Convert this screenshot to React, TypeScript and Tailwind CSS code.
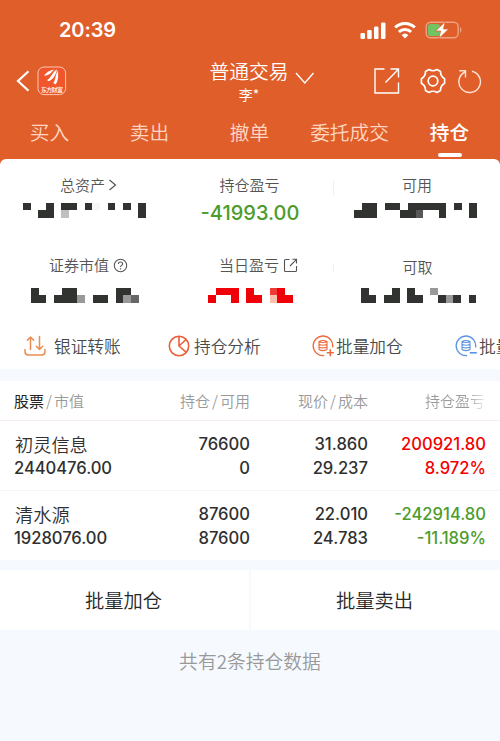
import React from 'react';

const CELL = 7.69;

const SHADES: Record<string, string> = {
  k: '#303330',
  d: '#585858',
  m: '#666666',
  g: '#999999',
  s: '#c0bfc0',
  w: '#f6f6f6',
  r: '#f00008',
  o: '#ef3b37',
  p: '#f8c0ae',
};

// Hidden amounts, drawn as two rows of coloured cells
const Mosaic: React.FC<{ rows: string[]; className: string }> = ({ rows, className }) => (
  <svg width={rows[0].length * CELL} height={15} className={className} shapeRendering="crispEdges" aria-hidden="true">
    {rows.map((row, y) =>
      row.split('').map((c, x) =>
        SHADES[c] ? (
          <rect key={`${x}-${y}`} x={x * CELL} y={y * 7} width={CELL + 0.1} height={7 + y} fill={SHADES[c]} />
        ) : null
      )
    )}
  </svg>
);

const StatusBar: React.FC = () => (
  <div className="flex h-[60px] items-center justify-between pl-[59px] pr-[37px]">
    <span className="font-['Inter'] text-[20px] font-semibold leading-6 tracking-[-0.1px]">20:39</span>
    <div className="flex items-center">
      <svg width="27" height="17" viewBox="0 0 27 17" fill="#fff">
        <rect x="0.5" y="11" width="4.5" height="6" rx="1.2" />
        <rect x="7.2" y="8" width="4.5" height="9" rx="1.2" />
        <rect x="14" y="4.5" width="4.5" height="12.5" rx="1.2" />
        <rect x="21" y="0.5" width="4.5" height="16.5" rx="1.2" />
      </svg>
      <svg width="22" height="17" viewBox="0 0 22 17" className="ml-[7px]" fill="none" stroke="#fff" strokeWidth="3">
        <path d="M1.2 5.5a14 14 0 0 1 19.6 0" />
        <path d="M4.9 9.8a9 9 0 0 1 12.2 0" />
        <path d="M11 16.4 7.6 13a5 5 0 0 1 6.8 0Z" fill="#fff" stroke="none" />
      </svg>
      <svg width="38" height="18" viewBox="0 0 38 18" className="ml-[9px]">
        <rect x="1.2" y="1.2" width="32" height="15.6" rx="4.5" fill="none" stroke="#f0a183" strokeWidth="1.4" />
        <path d="M35 6.3c2 .8 2 4.6 0 5.4Z" fill="#f0a183" />
        <rect x="3" y="3" width="12" height="12" rx="2.5" fill="#72c363" />
        <path d="M20.2 0.8 10.6 10h5l-1.7 7.5L23.6 8h-5.2l1.8-7.2Z" fill="#fff" stroke="#df5e29" strokeWidth="0.7" />
      </svg>
    </div>
  </div>
);

const AppLogo: React.FC = () => (
  <svg width="30" height="30" viewBox="0 0 30 30" className="ml-[7px]">
    <rect x="1" y="1" width="27.6" height="27.6" rx="6" fill="#f0552c" stroke="#fbc9b2" strokeWidth="1" />
    <path d="M7 9.8c2-3.3 6-5.7 10.5-6.2-2.7 1.5-3.7 5.8-10.2 6.2Z" fill="#fff" />
    <path d="M10 14c4.2-1.7 5-8 10-10.5-1 3.5-2.3 9.5-8.5 11.8Z" fill="#fff" />
    <path d="M16.3 17c2.4-3 2.2-9.5 4.6-12.5.6 4.2.7 10-2.3 14Z" fill="#fff" />
    <text x="14.9" y="25.6" textAnchor="middle" textLength="22" fontSize="6" fontWeight="500" fill="#fff" fontFamily="'Noto Sans CJK SC', sans-serif">东方财富</text>
  </svg>
);

const NavBar: React.FC = () => (
  <div className="grid h-[42px] grid-cols-[1fr_auto_1fr] grid-rows-[42px] items-center">
    <div className="flex items-center pl-4">
      <svg width="14" height="22" viewBox="0 0 14 22" fill="none" stroke="#fff" strokeWidth="2.2">
        <path d="M12.5 1.3 2 11l10.5 9.7" />
      </svg>
      <AppLogo />
    </div>
    <div className="flex h-[42px] flex-col items-center">
      <div className="relative -ml-[2px] -mt-px text-[19.8px] font-[350] leading-[23px]">
        普通交易
        <svg width="20" height="13" viewBox="0 0 20 13" className="absolute left-[86px] top-[13px]" fill="none" stroke="#fff" strokeWidth="1.4">
          <path d="M1 1l8.8 10L18.5 1" />
        </svg>
      </div>
      <div className="-ml-[2px] text-sm leading-[25px]">李*</div>
    </div>
    <div className="flex items-center justify-end pr-[18px]">
      <svg width="26" height="26" viewBox="0 0 26 26" fill="none" stroke="#fff" strokeWidth="1.4">
        <path d="M10.5 1H1v24h23.5V14.5M11.5 14.5 24.2 1.5M16.5 1h8v8.5" />
      </svg>
      <svg width="28" height="28" viewBox="0 0 28 28" className="ml-[19px]" fill="none" stroke="#fff" strokeWidth="1.7">
        <path
          strokeLinejoin="round"
          d="M10 2.5Q14 5 18 2.5L21.5 4.5Q21.4 9.2 25.6 11.7V16.3Q21.4 18.8 21.5 23.5L18 25.5Q14 23 10 25.5L6.5 23.5Q6.6 18.8 2.4 16.3V11.7Q6.6 9.2 6.5 4.5Z"
        />
        <circle cx="14" cy="14" r="4.8" />
      </svg>
      <svg width="25" height="25" viewBox="0 0 25 25" className="ml-[10px]" fill="none" stroke="#ffe3d5" strokeWidth="1.4">
        <path d="M15 2.2A10.8 10.8 0 1 1 8 3M2.3 1.8h6.2v6.8" />
      </svg>
    </div>
  </div>
);

const TABS = ['买入', '卖出', '撤单', '委托成交'];

const TradeTabs: React.FC = () => (
  <div className="grid h-[57px] grid-cols-5 pt-[7px] text-center text-[19.7px] leading-[45px]">
    {TABS.map((tab) => (
      <div key={tab} className="-ml-px font-[350] text-[#ffd6c4]">{tab}</div>
    ))}
    <div className="flex flex-col items-center font-medium">
      <span className="-ml-px">持仓</span>
      <span className="-mt-px h-[4px] w-6 rounded-full bg-white" />
    </div>
  </div>
);

const Label: React.FC<{ children: React.ReactNode }> = ({ children }) => (
  <div className="flex h-6 items-center justify-center gap-[2px] text-[15px] font-[350] leading-6 text-[#555]">{children}</div>
);

const Summary: React.FC = () => (
  <div className="grid h-[162px] grid-cols-[167px_166px_167px] grid-rows-[81px_81px]">
    <div className="pt-[14px]">
      <div className="pl-[10px]">
        <Label>
          总资产
          <svg width="9" height="12" viewBox="0 0 9 12" fill="none" stroke="#555" strokeWidth="1.2" className="ml-px">
            <path d="M1.5 1l6 5-6 5" />
          </svg>
        </Label>
      </div>
      <Mosaic className="ml-[23px] mt-[6px]" rows={['k..k.kk.kw.k.k.k', '..kk.s.........k']} />
    </div>
    <div className="pt-[14px]">
      <div className="-ml-px">
        <Label>持仓盈亏</Label>
      </div>
      <div className="text-center font-['Inter'] text-[20px] font-medium leading-8 text-[#4c9c2c]">-41993.00</div>
    </div>
    <div className="flex pt-[22px]">
      <div className="h-[14px] w-px bg-[#f3eeee]" />
      <div className="-mt-2 flex-1">
        <Label>可用</Label>
        <Mosaic className="ml-[20px] mt-[6px]" rows={['.kk.kk.kkkkk.k.k', 'kkk...kkd..k...k']} />
      </div>
    </div>
    <div className="pt-[13px]">
      <div className="pl-[10px]">
        <Label>
          证券市值
          <svg width="15" height="15" viewBox="0 0 15 15" fill="none" stroke="#555" strokeWidth="1.1" className="ml-[2px]">
            <circle cx="7.5" cy="7.5" r="6.2" />
            <path d="M5.4 5.9c0-2.7 4.2-2.5 4.2 0 0 1.5-2.1 1.5-2.1 3.2M7.5 10.2v1.2" />
          </svg>
        </Label>
      </div>
      <Mosaic className="ml-[31px] mt-[11px]" rows={['k...kk.....kk.', 'kk.kkkg.kk.kgm']} />
    </div>
    <div className="pt-[13px]">
      <div className="pl-[17px]">
        <Label>
          当日盈亏
          <svg width="15" height="15" viewBox="0 0 15 15" fill="none" stroke="#555" strokeWidth="1.1" className="ml-[2px]">
            <path d="M6.5 1.5h-4a1 1 0 0 0-1 1v10a1 1 0 0 0 1 1h10a1 1 0 0 0 1-1V8M7 8l6.3-6.3M9.3 1.3h4.2v4.2" />
          </svg>
        </Label>
      </div>
      <Mosaic className="ml-[41px] mt-[11px]" rows={['.rrr.r..or.', 'r..r.rr.prr']} />
    </div>
    <div className="flex pt-[23px]">
      <div className="h-2 w-px bg-[#f3eeee]" />
      <div className="-mt-2 flex-1">
        <div className="pl-px">
          <Label>可取</Label>
        </div>
        <Mosaic className="ml-[27px] mt-[9px]" rows={['k...k.k..g.....', 'kk.kk.kk..kgk.k']} />
      </div>
    </div>
  </div>
);

const TransferIcon: React.FC = () => (
  <svg width="22" height="22" viewBox="0 0 22 22" fill="none" stroke="#e98d52" strokeWidth="1.5" strokeLinecap="round" strokeLinejoin="round">
    <path d="M6.5 14.5V2L3.3 5.2M6.5 2l3.2 3.2M15.5 1.5v13l-3.2-3.2M15.5 14.5l3.2-3.2M1 14.5v2.3q0 3.2 3.2 3.2h13.6q3.2 0 3.2-3.2v-2.3" />
  </svg>
);

const PieIcon: React.FC = () => (
  <svg width="22" height="22" viewBox="0 0 22 22" fill="none" stroke="#e9603a" strokeWidth="1.6">
    <circle cx="11" cy="11" r="9.7" />
    <path d="M11 1.5V11l7 6.2M11 11l7-6.5" />
  </svg>
);

const BatchIcon: React.FC<{ color: string; plus?: boolean }> = ({ color, plus }) => (
  <svg width="22" height="22" viewBox="0 0 22 22" fill="none" stroke={color} strokeWidth="1.3">
    <path d="M20.6 12.5a9.8 9.8 0 1 0-8.4 8" />
    <path d="M7 6.5q4-2 8 0v8q-4 2.2-8 0ZM7 6.5q4 2 8 0M7 9.3q4 1.8 8 0M7 12q4 1.8 8 0" strokeWidth="1.1" />
    <path d={plus ? 'M14.8 17.8h7M18.3 14.3v7' : 'M14.8 17.8h7'} strokeWidth="1.6" />
  </svg>
);

const ACTIONS = [
  { icon: <TransferIcon />, label: '银证转账', className: 'w-[144px] gap-2' },
  { icon: <PieIcon />, label: '持仓分析', className: 'w-[144px] gap-1' },
  { icon: <BatchIcon color="#ea6a3b" plus />, label: '批量加仓', className: 'w-[143px] gap-[2px]' },
  { icon: <BatchIcon color="#5a93e0" />, label: '批量', className: 'w-[100px] gap-[2px]' },
];

const QuickActions: React.FC = () => (
  <div className="flex h-12 overflow-hidden pl-6 text-[16.7px] font-[350] text-[#4a4a4a]">
    {ACTIONS.map((a) => (
      <div key={a.label} className={`flex h-[50px] shrink-0 items-center whitespace-nowrap ${a.className}`}>
        {a.icon}
        <span className="pt-px">{a.label}</span>
      </div>
    ))}
  </div>
);

const HOLDINGS = [
  { name: '初灵信息', value: '2440476.00', amount: '76600', usable: '0', price: '31.860', cost: '29.237', profit: '200921.80', rate: '8.972%', color: 'text-[#f40000]' },
  { name: '清水源', value: '1928076.00', amount: '87600', usable: '87600', price: '22.010', cost: '24.783', profit: '-242914.80', rate: '-11.189%', color: 'text-[#4c9c2c]' },
];

const HoldingsTable: React.FC = () => (
  <div className="h-[179px] bg-white">
    <div className="grid h-10 grid-cols-[136px_100px_118px_117px] border-b border-[#f7eeee] pl-[14px] text-right text-[15px] font-[350] leading-[39px] text-[#999]">
      <div className="text-left"><span className="font-normal text-[#222]">股票</span><span className="px-[2px]">/</span>市值</div>
      <div>持仓<span className="px-[2px]">/</span>可用</div>
      <div>现价<span className="px-[2px]">/</span>成本</div>
      <div className="bg-gradient-to-r from-[#999] from-85% to-[#eee] bg-clip-text text-transparent">持仓盈亏</div>
    </div>
    {HOLDINGS.map((h) => (
      <div
        key={h.name}
        className="grid h-[70px] grid-cols-[136px_100px_118px_118px] border-b border-[#f5f5f5] pl-[14px] pt-[11px] text-right font-['Inter'] text-[16.6px] font-medium leading-6 text-[#303030] last:border-b-0"
      >
        <div className="text-left">
          <div className="h-6 pl-px font-['Noto_Sans_CJK_SC'] text-[18.2px] font-[350] leading-[25px]">{h.name}</div>
          <div className="tracking-[-0.05px]">{h.value}</div>
        </div>
        <div>
          <div>{h.amount}</div>
          <div>{h.usable}</div>
        </div>
        <div>
          <div>{h.price}</div>
          <div>{h.cost}</div>
        </div>
        <div className={h.color}>
          <div>{h.profit}</div>
          <div>{h.rate}</div>
        </div>
      </div>
    ))}
  </div>
);

const App: React.FC = () => (
  <div className="flex h-[741px] w-[500px] flex-col overflow-hidden bg-[#f6faff] font-['Noto_Sans_CJK_SC',sans-serif]">
    <div className="bg-[#df5e29]">
      <div className="text-white">
        <StatusBar />
        <NavBar />
        <TradeTabs />
      </div>
      <div className="rounded-t-md bg-white">
        <Summary />
        <QuickActions />
      </div>
    </div>
    <div className="mt-3">
      <HoldingsTable />
    </div>
    <div className="mt-[10px] grid h-[59px] grid-cols-2 gap-[2px] text-center text-[19.3px] font-[350] leading-[60px] text-[#282828]">
      <button className="bg-white pr-[2px]">批量加仓</button>
      <button className="bg-white pr-[2px]">批量卖出</button>
    </div>
    <div className="mt-[18px] text-center text-[18.8px] font-[350] leading-7 text-[#999]">共有2条持仓数据</div>
  </div>
);

export default App;
